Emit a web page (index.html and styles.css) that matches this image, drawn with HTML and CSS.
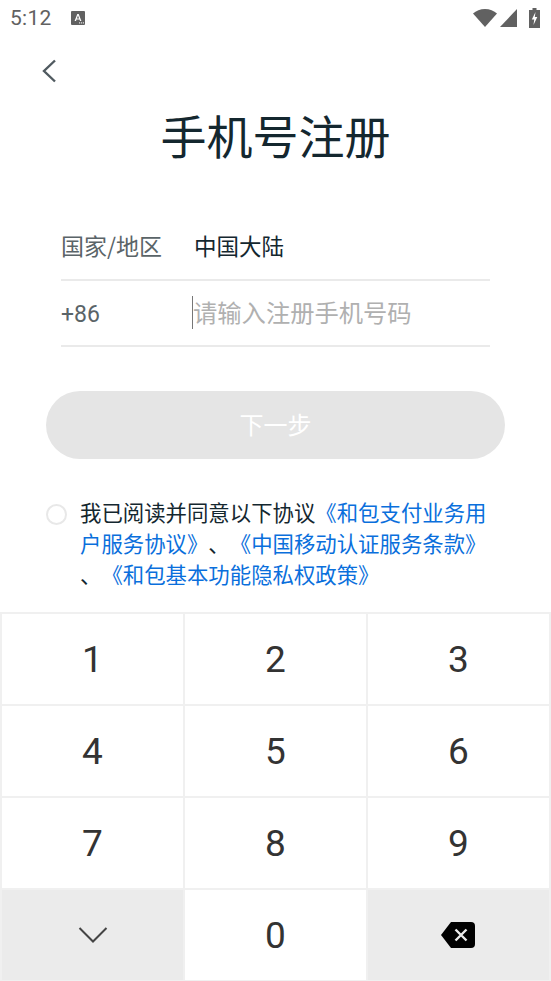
FILE: index.html
```html
<!DOCTYPE html>
<html lang="zh-CN">
<head>
    <meta charset="UTF-8">
    <meta name="viewport" content="width=device-width, initial-scale=1.0">
    <title>手机号注册</title>
    <link rel="stylesheet" href="styles.css">
</head>
<body>
<div class="screen">
    <div class="status-bar">
        <div class="status-left">
            <span class="time">5:12</span>
            <svg class="ime-icon" width="14" height="14" viewBox="0 0 14 14">
                <rect width="14" height="14" rx="1" fill="#616161"/>
                <path d="M3.6 10 6.3 3h1.4l2.7 7H9l-.5-1.5h-3L5 10zM5.9 7.4h2.2L7 4.4z" fill="#fff"/>
                <rect x="8" y="11.4" width="1.2" height="1" fill="#fff"/>
                <rect x="10" y="11.4" width="1.2" height="1" fill="#fff"/>
                <rect x="12" y="11.4" width="1" height="1" fill="#fff"/>
            </svg>
        </div>
        <div class="status-right">
            <svg width="24" height="18" viewBox="0 0 24 18"><path d="M0 4.5C3 1.800 7.300 0 12 0s9 1.800 12 4.500L12 18z" fill="#616161"/></svg>
            <svg width="17" height="18" viewBox="0 0 17 18"><path d="M17 0v18H0z" fill="#616161"/></svg>
            <svg class="battery" width="11" height="20" viewBox="0 0 11 20"><path d="M3.500 0h4v2H11v18H0V2h3.500z" fill="#616161"/><path d="M6.500 4 2.800 11.500h2.400L4.500 17l3.800-8H5.800z" fill="#fff"/></svg>
        </div>
    </div>

    <div class="nav">
        <svg width="14" height="24" viewBox="0 0 14 24"><path d="M13 1.500 2 12l11 10.500" fill="none" stroke="#505a60" stroke-width="2.400"/></svg>
    </div>

    <h1 class="title">手机号注册</h1>

    <div class="form">
        <div class="form-row country-row">
            <span class="row-label">国家/地区</span>
            <span class="row-value">中国大陆</span>
        </div>
        <div class="form-row phone-row">
            <span class="row-label code">+86</span>
            <span class="caret"></span>
            <span class="placeholder">请输入注册手机号码</span>
        </div>
    </div>

    <div class="next-btn">下一步</div>

    <div class="agreement">
        <span class="check"></span>
        <p class="agreement-text">我已阅读并同意以下协议<a>《和包支付业务用</a><br><a>户服务协议》</a>、<a>《中国移动认证服务条款》</a><br>、<a>《和包基本功能隐私权政策》</a></p>
    </div>

    <div class="keypad">
        <div class="key">1</div>
        <div class="key">2</div>
        <div class="key">3</div>
        <div class="key">4</div>
        <div class="key">5</div>
        <div class="key">6</div>
        <div class="key">7</div>
        <div class="key">8</div>
        <div class="key">9</div>
        <div class="key key-dark">
            <svg width="30" height="18" viewBox="0 0 30 18"><path d="M1.500 2 15 15.500 28.500 2" fill="none" stroke="#444" stroke-width="2"/></svg>
        </div>
        <div class="key">0</div>
        <div class="key key-dark">
            <svg class="backspace" width="34" height="26" viewBox="0 0 34 26">
                <path d="M10 0h20a4 4 0 0 1 4 4v18a4 4 0 0 1-4 4H10L0 13z" fill="#000"/>
                <path d="M14.500 7.500 25.500 18.500M25.500 7.500 14.500 18.500" stroke="#ebebeb" stroke-width="2.400"/>
            </svg>
        </div>
    </div>
</div>
</body>
</html>
```

FILE: styles.css
```css
* {
    box-sizing: border-box;
}

body {
    margin: 0;
    background: #fff;
    font-family: "Noto Sans CJK SC", "Noto Sans", sans-serif;
    text-spacing-trim: space-all;
}

.screen {
    width: 551px;
    height: 981px;
    overflow: hidden;
    display: flex;
    flex-direction: column;
}

.status-bar {
    height: 36px;
    padding: 0 11px 0 10px;
    display: flex;
    justify-content: space-between;
    align-items: center;
}

.status-left {
    display: flex;
    align-items: center;
    gap: 19px;
}

.time {
    font-family: Roboto, sans-serif;
    font-size: 21px;
    color: #616161;
    letter-spacing: 0.3px;
}

.status-right {
    display: flex;
    align-items: center;
    gap: 3px;
}

.battery {
    margin-left: 9px;
}

.nav {
    height: 47px;
    padding: 23px 0 0 42px;
}

.title {
    margin: 0;
    height: 99px;
    padding-top: 21px;
    line-height: 60px;
    text-align: center;
    font-size: 46px;
    font-weight: 400;
    color: #14272f;
}

.form {
    margin: 33px 61px 0;
}

.form-row {
    height: 66px;
    border-bottom: 2px solid #eaeaea;
    display: flex;
    align-items: center;
    position: relative;
}

.country-row {
    padding-bottom: 4px;
}

.phone-row {
    padding-bottom: 2px;
}

.row-label {
    width: 133px;
    font-size: 23px;
    color: #5a6468;
}

.code {
    font-family: Roboto, sans-serif;
    margin-top: 4px;
}

.row-value {
    font-size: 22.500px;
    color: #14272f;
}

.caret {
    position: absolute;
    left: 131px;
    top: 15px;
    width: 1px;
    height: 33px;
    background: #777;
}

.placeholder {
    font-size: 24.300px;
    color: #b0b0b0;
    margin: 0 0 2px -1px;
}

.next-btn {
    margin: 44px 46px 0;
    height: 68px;
    padding-bottom: 3px;
    border-radius: 34px;
    background: #e5e5e5;
    color: #fff;
    font-size: 24px;
    display: flex;
    align-items: center;
    justify-content: center;
}

.agreement {
    margin: 37px 0 0 46px;
    display: flex;
    align-items: flex-start;
}

.check {
    flex: none;
    width: 21px;
    height: 21px;
    margin-top: 8px;
    margin-right: 13px;
    border: 2px solid #e8e8e8;
    border-radius: 50%;
}

.agreement-text {
    margin: 0;
    font-size: 21.400px;
    line-height: 31px;
    color: #14272f;
    white-space: nowrap;
}

.agreement-text a {
    color: #0a6fdc;
}

.keypad {
    position: absolute;
    top: 612px;
    left: 0;
    width: 551px;
    height: 369px;
    padding: 2px 0 0 2px;
    background: #f0f0f0;
    display: grid;
    grid-template-columns: 181px 181px 181px;
    grid-auto-rows: 90px;
    gap: 2px;
}

.key {
    background: #fff;
    display: flex;
    align-items: center;
    justify-content: center;
    font-family: Roboto, sans-serif;
    font-size: 37px;
    color: #333;
}

.key-dark {
    background: #ebebeb;
}

.backspace {
    margin-right: 2px;
}
```
